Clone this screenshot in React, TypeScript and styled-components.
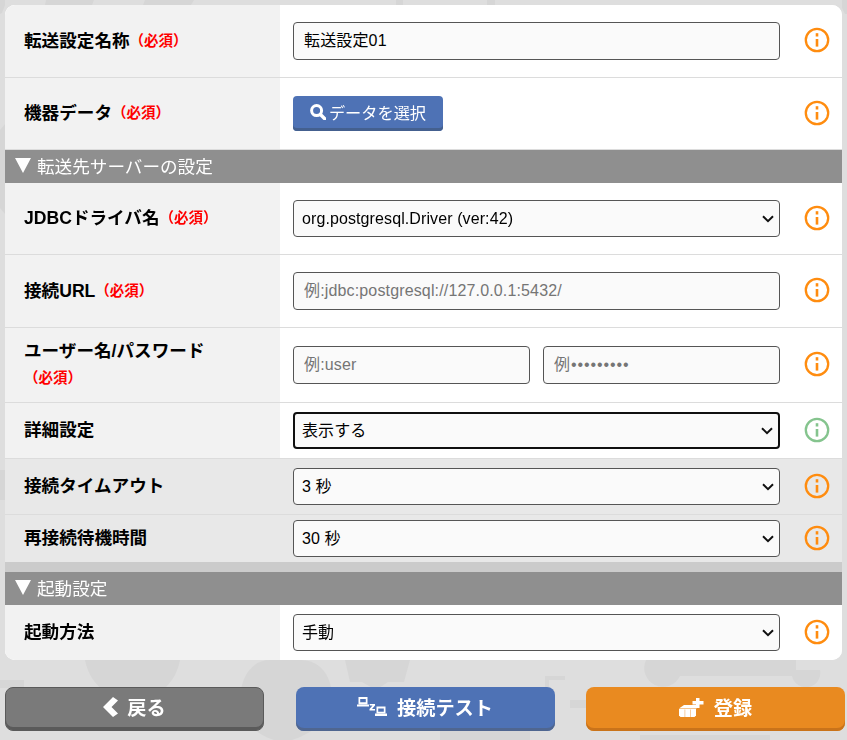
import React from 'react'

import styled, { createGlobalStyle } from 'styled-components'

const FONT = '"Liberation Sans", "Noto Sans CJK JP", sans-serif'

const CHEVRON =
  "data:image/svg+xml,%3Csvg xmlns='http://www.w3.org/2000/svg' width='12' height='8' viewBox='0 0 12 8'%3E%3Cpath d='M1 1.2l5 5 5-5' fill='none' stroke='%23111' stroke-width='2'/%3E%3C/svg%3E"

const GlobalStyle = createGlobalStyle`
  html, body {
    margin: 0;
    padding: 0;
    height: 740px;
    overflow: hidden;
    background: #dedede;
    font-family: ${FONT};
    color: #000;
  }
`

const Backdrop = styled.svg`
  position: fixed;
  left: 0;
  top: 0;
  width: 847px;
  height: 740px;
  z-index: 0;
`

const Page = styled.div`
  position: relative;
  z-index: 1;
  display: flex;
  flex-direction: column;
  padding: 5px 2px 0 5px;
`

const Card = styled.div`
  margin-right: 3px;
  background: #fff;
  border-radius: 10px;
  overflow: hidden;
`

const Row = styled.div<{ $h: number; $shaded?: boolean; $last?: boolean }>`
  display: grid;
  grid-template-columns: 275px 1fr 62px;
  height: ${(p) => p.$h}px;
  box-sizing: border-box;
  border-bottom: ${(p) => (p.$last ? 'none' : '1px solid #dcdcdc')};
  background: ${(p) => (p.$shaded ? '#e8e8e8' : '#fff')};
`

const LabelCell = styled.div<{ $shaded?: boolean }>`
  display: flex;
  flex-wrap: wrap;
  align-items: center;
  align-content: center;
  padding: 0 0 1px 19px;
  background: ${(p) => (p.$shaded ? '#e8e8e8' : '#f2f2f2')};
`

const Label = styled.span`
  font-size: 17.6px;
  font-weight: 700;
  line-height: 24px;
`

const Required = styled.span<{ $block?: boolean }>`
  flex-basis: ${(p) => (p.$block ? '100%' : 'auto')};
  font-size: 14.5px;
  font-weight: 700;
  color: #f00;
  line-height: 24px;
  margin-top: ${(p) => (p.$block ? '3px' : '0')};
`

const ValueCell = styled.div`
  display: flex;
  align-items: center;
  gap: 13px;
  padding-left: 13px;
`

const IconCell = styled.div`
  display: flex;
  align-items: center;
  padding: 0 0 2px 24px;
`

const TextInput = styled.input<{ $raised?: boolean }>`
  flex: 1;
  min-width: 0;
  height: 38px;
  box-sizing: border-box;
  padding: 0 10px ${(p) => (p.$raised ? '5px' : '0')};
  border: 1px solid #555;
  border-radius: 4px;
  background: #fafafa;
  color: #000;
  font-family: ${FONT};
  font-size: 16px;
  letter-spacing: 0.15px;

  &::placeholder {
    color: #757575;
    opacity: 1;
  }
`

const PasswordInput = styled(TextInput)`
  &::placeholder {
    letter-spacing: 0.9px;
  }
`

const Select = styled.select<{ $focused?: boolean }>`
  flex: 1;
  min-width: 0;
  height: 37px;
  box-sizing: border-box;
  padding: 0 ${(p) => (p.$focused ? '7px' : '8px')};
  border: ${(p) => (p.$focused ? '2px solid #101010' : '1px solid #555')};
  border-radius: 4px;
  appearance: none;
  background: #fafafa url("${CHEVRON}") no-repeat right 5px center;
  color: #000;
  font-family: ${FONT};
  font-size: 16px;
  letter-spacing: 0.1px;
`

const PickButton = styled.button`
  display: flex;
  align-items: center;
  justify-content: center;
  gap: 3px;
  width: 150px;
  height: 35px;
  box-sizing: border-box;
  padding: 0 0 4px;
  border: none;
  border-radius: 4px;
  background: #4e72b5;
  box-shadow: inset 0 -3px 0 #44608f;
  color: #fff;
  font-family: ${FONT};
  font-size: 16.2px;
`

const SectionHeader = styled.div`
  display: flex;
  align-items: center;
  gap: 6px;
  height: 33px;
  box-sizing: border-box;
  padding: 0 0 3px 10px;
  background: #8f8f8f;
  color: #fff;
  font-size: 17.6px;
`

const Arrow = styled.span`
  width: 0;
  height: 0;
  border-left: 8.5px solid transparent;
  border-right: 8.5px solid transparent;
  border-top: 15px solid #fff;
`

const Strip = styled.div`
  height: 10px;
  background: #cbcbcb;
`

const Footer = styled.div`
  display: flex;
  justify-content: space-between;
  margin-top: 27px;
`

const ActionButton = styled.button<{ $bg: string; $edge: string; $line?: string }>`
  display: flex;
  align-items: center;
  justify-content: center;
  width: 259px;
  height: 44px;
  box-sizing: border-box;
  padding: 0 0 4px;
  border: ${(p) => (p.$line ? `1px solid ${p.$line}` : 'none')};
  border-radius: 8px;
  background: ${(p) => p.$bg};
  box-shadow: inset 0 -3px 0 ${(p) => p.$edge};
  color: #fff;
  font-family: ${FONT};
  font-size: 19.2px;
  font-weight: 700;
`

const ActionText = styled.span<{ $gap: number }>`
  margin-left: ${(p) => p.$gap}px;
`

const InfoIcon: React.FC<{ green?: boolean }> = ({ green }) => {
  const color = green ? '#85c48e' : '#ff8c0f'
  return (
    <svg width="26" height="26" viewBox="0 0 26 26" fill="none">
      <circle cx="13" cy="13" r="11.2" stroke={color} strokeWidth="2.3" />
      <rect x="11.7" y="6.2" width="2.6" height="3.3" fill={color} />
      <rect x="11.7" y="12" width="2.6" height="7.6" fill={color} />
    </svg>
  )
}

const SearchIcon = () => (
  <svg width="16" height="16" viewBox="0 0 16 16" fill="none" stroke="#fff">
    <circle cx="6.6" cy="6.6" r="5" strokeWidth="3" />
    <path d="M10.500 10.500l4.200 4.200" strokeWidth="3.400" strokeLinecap="round" />
  </svg>
)

const BackIcon = () => (
  <svg width="15" height="20" viewBox="0 0 15 20" fill="#fff">
    <path d="M10 0l5 3.500L8.500 10 15 16.500 10 20 0 10z" />
  </svg>
)

const ConnectIcon = () => (
  <svg width="30" height="20" viewBox="0 0 30 20" fill="#fff">
    <path d="M1.500 0h9v7.500h-9zM3.200 2v3.200h5.600V2z" fillRule="evenodd" />
    <rect x="0" y="7.500" width="12" height="2" />
    <path d="M12.500 7h5.500v1.600L15 12h3v1.600h-5.500V12l3-3.400h-2.500z" />
    <path d="M19.500 9.500h9v7h-9zM21.200 11.500v3.200h5.600v-3.200z" fillRule="evenodd" />
    <rect x="18" y="16.500" width="12" height="2.500" />
  </svg>
)

const RegisterIcon = () => (
  <svg width="25" height="20" viewBox="0 0 25 20" fill="#fff">
    <rect x="17" y="1" width="3.500" height="10" />
    <rect x="13.500" y="4" width="11" height="3.500" />
    <path d="M0 11.500l5-3.500h12.500v3.500z" />
    <path d="M0 12h17v6.500l-1.500 1.500H1.500L0 18.500z" />
    <path d="M5.500 12.500h.8V20h-.8zM11 12.500h.8V20H11z" fill="#f3c08a" />
  </svg>
)

const App = () => {
  return (
    <>
      <GlobalStyle />
      <Backdrop viewBox="0 0 847 740" fill="#d6d6d6">
        <path d="M46 0h48l-2 5H45zM145 0h49l-3 5h-48zM396 0h7v5h-7zM487 0h8v5h-8z" />
        <path d="M0 0h5v5l-3 8-2 1zM847 0h-5v8l3 6h2z" />
        <path d="M0 130l5-6v90l-5-6zM0 470h5v30H0z" />
        <path d="M85 660h95c-4 22-20 36-37 40v6h-20v-6c-17-4-34-18-38-40z" />
        <path d="M240 700c0-20 10-40 30-40h30c22 0 32 18 32 38 0 20-20 36-40 42h-18c-20-6-34-22-34-40z" />
        <path d="M345 660h65l-6 22h-16l-12 8-14-8h-12z" />
        <path d="M545 676h20v4h-16v14h-4zM570 700h30v8h-30z" />
        <path d="M646 660h150v10H820a14 14 0 1 1-28 6H680a14 14 0 1 1-34-16z" />
        <path d="M0 680h24v8H0zM440 731h90v9h-90zM640 735h130v5H640z" />
      </Backdrop>
      <Page>
        <Card>
          <Row $h={73}>
            <LabelCell>
              <Label>転送設定名称</Label>
              <Required>（必須）</Required>
            </LabelCell>
            <ValueCell>
              <TextInput $raised defaultValue="転送設定01" />
            </ValueCell>
            <IconCell>
              <InfoIcon />
            </IconCell>
          </Row>
          <Row $h={72}>
            <LabelCell>
              <Label>機器データ</Label>
              <Required>（必須）</Required>
            </LabelCell>
            <ValueCell>
              <PickButton>
                <SearchIcon />
                データを選択
              </PickButton>
            </ValueCell>
            <IconCell>
              <InfoIcon />
            </IconCell>
          </Row>
          <SectionHeader>
            <Arrow />
            転送先サーバーの設定
          </SectionHeader>
          <Row $h={72}>
            <LabelCell>
              <Label>JDBCドライバ名</Label>
              <Required>（必須）</Required>
            </LabelCell>
            <ValueCell>
              <Select defaultValue="pg">
                <option value="pg">org.postgresql.Driver (ver:42)</option>
              </Select>
            </ValueCell>
            <IconCell>
              <InfoIcon />
            </IconCell>
          </Row>
          <Row $h={73}>
            <LabelCell>
              <Label>接続URL</Label>
              <Required>（必須）</Required>
            </LabelCell>
            <ValueCell>
              <TextInput placeholder="例:jdbc:postgresql://127.0.0.1:5432/" />
            </ValueCell>
            <IconCell>
              <InfoIcon />
            </IconCell>
          </Row>
          <Row $h={75}>
            <LabelCell>
              <Label>ユーザー名/パスワード</Label>
              <Required $block>（必須）</Required>
            </LabelCell>
            <ValueCell>
              <TextInput placeholder="例:user" />
              <PasswordInput placeholder="例•••••••••" />
            </ValueCell>
            <IconCell>
              <InfoIcon />
            </IconCell>
          </Row>
          <Row $h={56}>
            <LabelCell>
              <Label>詳細設定</Label>
            </LabelCell>
            <ValueCell>
              <Select $focused defaultValue="show">
                <option value="show">表示する</option>
              </Select>
            </ValueCell>
            <IconCell>
              <InfoIcon green />
            </IconCell>
          </Row>
          <Row $h={56} $shaded>
            <LabelCell $shaded>
              <Label>接続タイムアウト</Label>
            </LabelCell>
            <ValueCell>
              <Select defaultValue="3">
                <option value="3">3 秒</option>
              </Select>
            </ValueCell>
            <IconCell>
              <InfoIcon />
            </IconCell>
          </Row>
          <Row $h={47} $shaded $last>
            <LabelCell $shaded>
              <Label>再接続待機時間</Label>
            </LabelCell>
            <ValueCell>
              <Select defaultValue="30">
                <option value="30">30 秒</option>
              </Select>
            </ValueCell>
            <IconCell>
              <InfoIcon />
            </IconCell>
          </Row>
          <Strip />
          <SectionHeader>
            <Arrow />
            起動設定
          </SectionHeader>
          <Row $h={55} $last>
            <LabelCell>
              <Label>起動方法</Label>
            </LabelCell>
            <ValueCell>
              <Select defaultValue="manual">
                <option value="manual">手動</option>
              </Select>
            </ValueCell>
            <IconCell>
              <InfoIcon />
            </IconCell>
          </Row>
        </Card>
        <Footer>
          <ActionButton $bg="#7a7a7a" $edge="#5a5a5a" $line="#5a5a5a">
            <BackIcon />
            <ActionText $gap={9}>戻る</ActionText>
          </ActionButton>
          <ActionButton $bg="#4e72b5" $edge="#4f6690">
            <ConnectIcon />
            <ActionText $gap={10}>接続テスト</ActionText>
          </ActionButton>
          <ActionButton $bg="#e98a20" $edge="#c9731a">
            <RegisterIcon />
            <ActionText $gap={10}>登録</ActionText>
          </ActionButton>
        </Footer>
      </Page>
    </>
  )
}

export default App
